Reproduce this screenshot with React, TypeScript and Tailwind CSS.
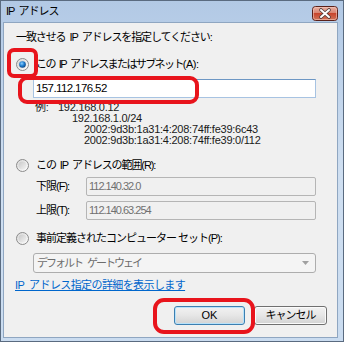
import React from "react";

const FONT = { fontFamily: '"Liberation Sans", "Noto Sans CJK JP", sans-serif' };

function Radio({ checked }: { checked?: boolean }) {
  return (
    <svg width="13" height="13" viewBox="0 0 13 13" className="shrink-0">
      <defs>
        <linearGradient id="rOuter" x1="0" y1="0" x2="1" y2="1">
          <stop offset="0" stopColor="#d9d9d9" />
          <stop offset="1" stopColor="#ffffff" />
        </linearGradient>
        <linearGradient id="rInner" x1="0" y1="0" x2="1" y2="1">
          <stop offset="0" stopColor="#c8c8c8" />
          <stop offset="1" stopColor="#f4f4f4" />
        </linearGradient>
        <radialGradient id="rBlue" cx="0.4" cy="0.35" r="0.7">
          <stop offset="0" stopColor="#8fd0ff" />
          <stop offset="0.5" stopColor="#1f7fd1" />
          <stop offset="1" stopColor="#0a3f7a" />
        </radialGradient>
      </defs>
      <circle cx="6.5" cy="6.5" r="6" fill="url(#rOuter)" stroke="#8a8a8a" strokeWidth="1" />
      <circle cx="6.5" cy="6.5" r="4" fill="url(#rInner)" />
      {checked && <circle cx="6.5" cy="6.5" r="3.3" fill="url(#rBlue)" />}
    </svg>
  );
}

function CloseButton() {
  return (
    <svg width="26" height="15" viewBox="0 0 26 15">
      <defs>
        <linearGradient id="cb" x1="0" y1="0" x2="0" y2="1">
          <stop offset="0" stopColor="#e9b3a8" />
          <stop offset="0.45" stopColor="#d98572" />
          <stop offset="0.5" stopColor="#c8452d" />
          <stop offset="1" stopColor="#d0775c" />
        </linearGradient>
      </defs>
      <rect x="0.5" y="0.5" width="25" height="14" rx="3" fill="url(#cb)" stroke="#5a211a" />
      <rect x="1.5" y="1.5" width="23" height="12" rx="2" fill="none" stroke="#f3c8bd" strokeOpacity="0.6" />
      <path d="M9 4 L17 11 M17 4 L9 11" stroke="#4a3a38" strokeWidth="3.6" strokeLinecap="round" />
      <path d="M9 4 L17 11 M17 4 L9 11" stroke="#ffffff" strokeWidth="2" strokeLinecap="round" />
    </svg>
  );
}

export default function App() {
  return (
    <div className="relative w-[344px] h-[342px] bg-[#bcd1ea] overflow-hidden text-[11px] text-black" style={FONT}>
      <div className="w-full h-full flex flex-col border border-[#5a6b80] bg-gradient-to-b from-[#b2c9e5] via-[#cfdff1] to-[#cadcf0]">
        {/* title bar */}
        <div className="h-[21px] shrink-0 flex items-center justify-between pl-[5px] pr-[5px]">
          <span className="tracking-[-1px] text-[11px] text-black">
            IP<span className="ml-[4px]">アドレス</span>
          </span>
          <div className="mt-[3px]">
            <CloseButton />
          </div>
        </div>
        {/* client */}
        <div className="ml-[2px] mr-[5px] mb-[3px] flex-1 bg-[#f0f0f0] border border-[#8fa6c1] flex flex-col pl-[12px] pr-[9px] pt-[7px]">
          <div className="h-[14px] leading-[14px] tracking-[-1.1px]">
            一致させる<span className="mx-[4px]">IP</span>アドレスを指定してください:
          </div>

          <div className="mt-[13px] h-[14px] flex items-center gap-[7px]">
            <Radio checked />
            <span className="tracking-[-1.6px] leading-[14px]">
              この<span className="mx-[4px]">IP</span>アドレスまたはサブネット<span className="tracking-[-0.5px]">(A):</span>
            </span>
          </div>

          <div className="mt-[8px] ml-[17px] h-[19px] w-[283px] bg-white border border-[#a7c3e2] border-t-[#6d97c4] flex items-center pl-[2px] text-[11.5px] tracking-[-0.6px]">
            157.112.176.52
          </div>

          <div className="mt-[4px] ml-[19px] flex flex-col text-[11px] text-[#1a1a1a] tracking-[-0.25px]">
            <div className="h-[11px] leading-[11px] flex">
              <span className="w-[23px]">例:</span>
              <span>192.168.0.12</span>
            </div>
            <div className="h-[11px] leading-[11px] pl-[37px]">192.168.1.0/24</div>
            <div className="h-[11px] leading-[11px] pl-[49px]">2002:9d3b:1a31:4:208:74ff:fe39:6c43</div>
            <div className="h-[11px] leading-[11px] pl-[49px]">2002:9d3b:1a31:4:208:74ff:fe39:0/112</div>
          </div>

          <div className="mt-[12px] h-[14px] flex items-center gap-[7px]">
            <Radio />
            <span className="tracking-[-1.1px] leading-[14px]">
              この<span className="mx-[4px]">IP</span>アドレスの範囲(R):
            </span>
          </div>

          <div className="mt-[5px] ml-[20px] h-[19px] flex items-center">
            <span className="w-[50px] tracking-[-1px]">下限(F):</span>
            <div className="h-[19px] w-[230px] border border-[#b5b5b5] rounded-[2px] bg-[#f0f0f0] flex items-center pl-[2px] text-[#707070] tracking-[-1px]">
              112.140.32.0
            </div>
          </div>
          <div className="mt-[5px] ml-[20px] h-[19px] flex items-center">
            <span className="w-[50px] tracking-[-1px]">上限(T):</span>
            <div className="h-[19px] w-[230px] border border-[#b5b5b5] rounded-[2px] bg-[#f0f0f0] flex items-center pl-[2px] text-[#707070] tracking-[-1px]">
              112.140.63.254
            </div>
          </div>

          <div className="mt-[11px] h-[14px] flex items-center gap-[7px]">
            <Radio />
            <span className="tracking-[-1px] leading-[14px]">事前定義されたコンピューター セット(P):</span>
          </div>

          <div className="mt-[8px] ml-[17px] h-[20px] w-[283px] border border-[#adadad] rounded-[3px] bg-[#f4f4f4] flex items-center justify-between pl-[3px] pr-[6px] text-[#6d6d6d]">
            <span className="tracking-[-2px]">
              デフォルト<span className="ml-[5px]">ゲートウェイ</span>
            </span>
            <svg width="7" height="4" viewBox="0 0 7 4">
              <path d="M0 0 H7 L3.5 4 Z" fill="#a0a0a0" />
            </svg>
          </div>

          <div className="mt-[5px] h-[14px] leading-[14px] -ml-[1px] text-[#0066cc] underline tracking-[-0.6px]">
            {"IP\u00a0\u00a0アドレス指定の詳細を表示します"}
          </div>

          <div className="mt-[14px] flex justify-end gap-[9px] pr-[1px]">
            <button className="h-[19px] w-[71px] rounded-[3px] border border-[#3c7fb1] bg-gradient-to-b from-[#f2f2f2] via-[#e6e6e6] to-[#d3d3d3] shadow-[inset_0_0_0_1px_#b8e2fa] flex items-center justify-center text-[11px] font-normal leading-none">
              OK
            </button>
            <button className="h-[19px] w-[73px] rounded-[3px] border border-[#707070] bg-gradient-to-b from-[#f2f2f2] via-[#e6e6e6] to-[#d3d3d3] shadow-[inset_0_0_0_1px_#fbfbfb] flex items-center justify-center tracking-[-1px] leading-none">
              キャンセル
            </button>
          </div>
        </div>
      </div>

      {/* red annotations */}
      <div className="absolute left-[7px] top-[48px] w-[31px] h-[30px] border-[4px] border-[#e8141c] rounded-[7px]" />
      <div className="absolute left-[18px] top-[76px] w-[181px] h-[28px] border-[4px] border-[#e8141c] rounded-[9px]" />
      <div className="absolute left-[153px] top-[298px] w-[102px] h-[36px] border-[4px] border-[#e8141c] rounded-[11px]" />
    </div>
  );
}
